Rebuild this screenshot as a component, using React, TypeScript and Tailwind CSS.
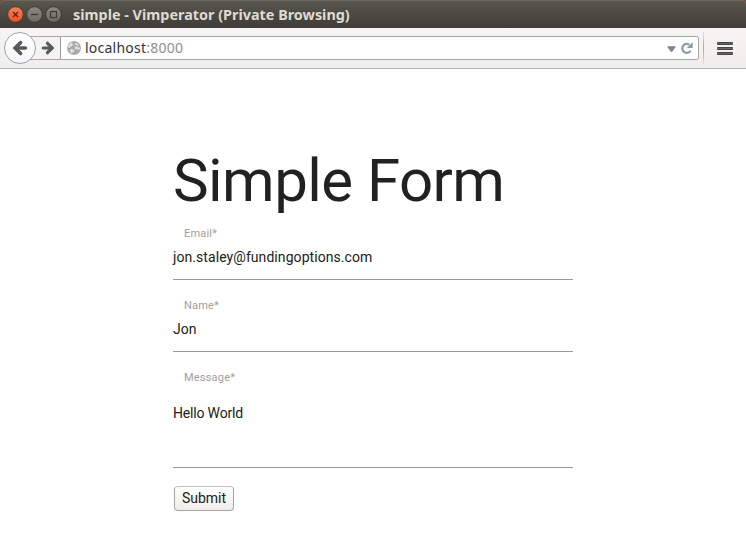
import React from 'react';

type FieldProps = { label: string; value: string; tracking?: string; multiline?: boolean };

function Field({ label, value, tracking = '', multiline }: FieldProps) {
  return (
    <div className={`flex flex-col border-b border-[#9b9b9b] ${multiline ? 'h-[116px]' : 'h-[72px]'}`}>
      <label className="mt-[18px] pl-[11px] text-[11px] leading-4 tracking-[0.2px] text-[#9e9e9e]">{label}</label>
      <div className={`text-[14px] leading-5 text-[#212121] ${tracking} ${multiline ? 'mt-[17px]' : 'mt-[5px]'}`}>{value}</div>
    </div>
  );
}

function WindowButton({ kind }: { kind: 'close' | 'min' | 'max' }) {
  const close = kind === 'close';
  return (
    <svg className="h-[17px] w-[17px]" viewBox="0 0 17 17" fill="none">
      <circle cx="8.5" cy="8.5" r="7.8" fill={close ? 'url(#orange)' : 'url(#grey)'} stroke="#373632" strokeWidth=".8" />
      <defs>
        <linearGradient id="orange" x2="0" y2="1"><stop stopColor="#f88059" /><stop offset="1" stopColor="#e9541f" /></linearGradient>
        <linearGradient id="grey" x2="0" y2="1"><stop stopColor="#8c8981" /><stop offset="1" stopColor="#6c6a62" /></linearGradient>
      </defs>
      {kind === 'close' && <path d="m6 6 5 5m0-5-5 5" stroke="#5b2412" strokeWidth="1.3" />}
      {kind === 'min' && <path d="M5 8.5h7" stroke="#3c3b37" strokeWidth="1.2" />}
      {kind === 'max' && <rect x="5.5" y="5.5" width="6" height="6" stroke="#3c3b37" strokeWidth="1.2" />}
    </svg>
  );
}

function Arrow({ className }: { className: string }) {
  return (
    <svg className={className} viewBox="0 0 16 16" fill="none" stroke="#585858" strokeWidth="3.6">
      <path d="M13.4 8H4" strokeLinecap="round" />
      <path d="M8.6 2.6 3.2 8l5.4 5.4" strokeLinejoin="miter" strokeLinecap="round" />
    </svg>
  );
}

export default function App() {
  return (
    <div className="h-[554px] w-[746px] overflow-hidden bg-white font-['Roboto',sans-serif]">
      <div className="h-7 bg-[#7c4a3c]">
        <header className="flex h-7 items-center rounded-t-[5px] border-t border-[#6b685e] bg-linear-to-b from-[#59564d] to-[#3e3d39] pl-[7px]">
          <div className="flex gap-[2px]">
            <WindowButton kind="close" />
            <WindowButton kind="min" />
            <WindowButton kind="max" />
          </div>
          <h2 className="ml-[11px] whitespace-nowrap font-['Noto_Sans',sans-serif] text-[14.4px] leading-5 font-bold text-[#dfdbd2]">
            simple - Vimperator (Private Browsing)
          </h2>
        </header>
      </div>

      <nav className="flex h-[41px] items-center border-b border-[#b4b0aa] bg-linear-to-b from-[#f6f5f4] to-[#efeeed] pl-1">
        <button className="z-10 flex h-8 w-8 shrink-0 items-center justify-center rounded-full border border-[#98a3b1] bg-linear-to-b from-white to-[#f5f5f5]">
          <Arrow className="h-4 w-4" />
        </button>
        <div className="-ml-[6px] flex h-6 w-[669px] rounded-r-[3px] border border-l-0 border-[#aaa7a3]">
          <button className="flex w-[31px] shrink-0 items-center justify-end border-r border-[#999] bg-[#f4f3f2] pr-[5px]">
            <Arrow className="h-[14px] w-[14px] rotate-180" />
          </button>
          <div className="flex flex-1 items-center rounded-r-[2px] bg-white pl-[6px]">
            <svg className="h-[14px] w-[14px]" viewBox="0 0 14 14">
              <circle cx="7" cy="7" r="6.9" fill="#a7a7a7" />
              <path d="M1.6 3.6 3.8 1.6 6 1.2 5 2.8l1.4.8-1.2 1.6-2 .6-.6 1.4L1 6.4ZM8.4 1.8l2.5.9 1 1.5-1.2.6-1.2-1-1 .6-.7-1ZM7.5 6l2.8-.8 1.1 1.3 1.8-.1-.8 2.4-1.3.5-.8-1.3-2.1.4ZM2.7 8.5 5 7.8l2.6 1.7-.7 1.4-1.5.6-.5 1.2-1.3-.9Z" fill="#dedede" />
            </svg>
            <span className="ml-1 font-['Noto_Sans',sans-serif] text-[14px] leading-5 tracking-[0.23px] text-[#333]">
              localhost<span className="text-[#8e8e8e]">:8000</span>
            </span>
            <svg className="ml-auto h-[7px] w-[9px] translate-y-px" viewBox="0 0 9 7">
              <path d="M.8.8h7.4L4.5 6Z" fill="#888" stroke="#6f6f6f" strokeWidth=".8" />
            </svg>
            <svg className="mr-[5px] ml-[5px] h-3 w-3" viewBox="0 0 12 12">
              <path d="M8.3 2.6A4.5 4.5 0 1 0 9.6 8.8" fill="none" stroke="#8b9aa6" strokeWidth="2.2" />
              <path d="M11.6 0v6H5.8Z" fill="#8b9aa6" />
            </svg>
          </div>
        </div>
        <div className="ml-1 h-8 w-px bg-linear-to-b from-[#dedede] via-[#a3adb5] to-[#dedede]" />
        <button className="ml-[13px] flex flex-col gap-[2px]">
          {[0, 1, 2].map((n) => <span key={n} className="h-[3px] w-4 rounded-[1px] border-y border-[#444] bg-[#666]" />)}
        </button>
      </nav>

      <main className="ml-[173px] w-[400px] pt-[80px]">
        <h1 className="h-[59px] whitespace-nowrap text-[60px] leading-[64px] tracking-[-0.56px] text-[#212121]">Simple Form</h1>
        <form>
          <Field label="Email*" value="jon.staley@fundingoptions.com" tracking="tracking-[0.07px]" />
          <Field label="Name*" value="Jon" />
          <Field label="Message*" value="Hello World" tracking="tracking-[-0.18px]" multiline />
          <button type="button" className="mt-[18px] ml-px flex h-[25px] w-[60px] items-center justify-center rounded-[4px] border border-[#aaa59f] border-t-[#c5c1bc] bg-linear-to-b from-white to-[#eeedeb] pb-[2px] text-[14px] leading-5 text-[#212121]">Submit</button>
        </form>
      </main>
    </div>
  );
}
